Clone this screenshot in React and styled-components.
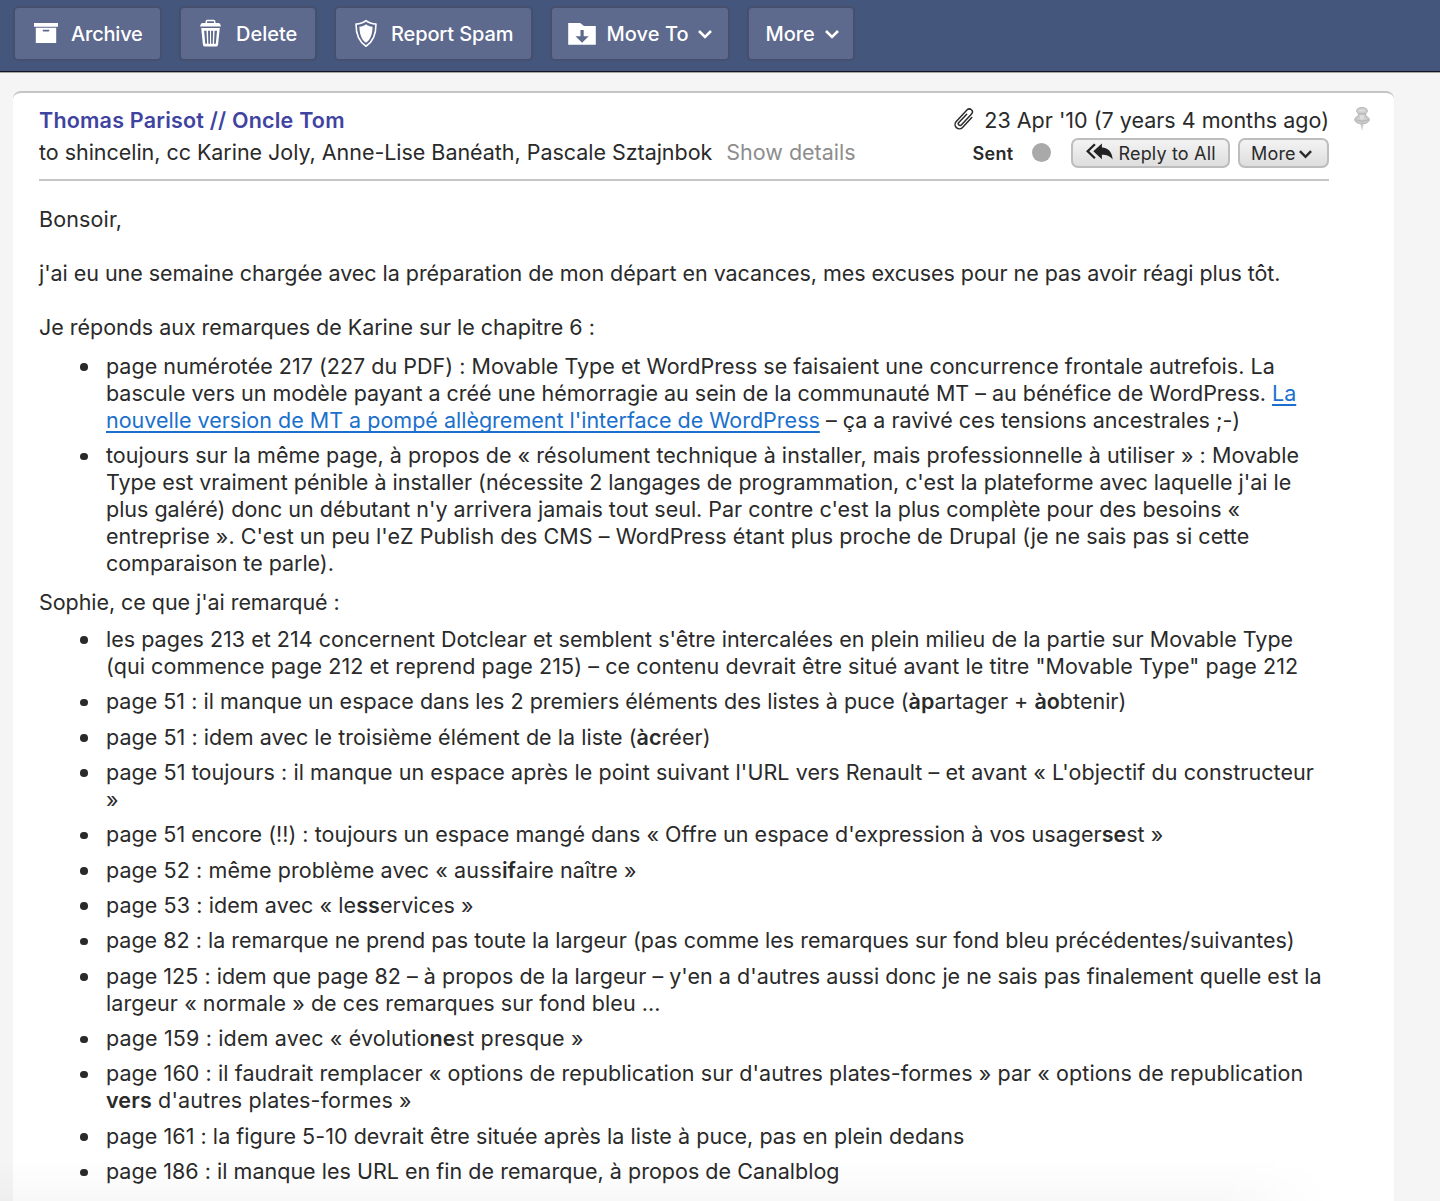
import React from 'react';
import styled, { createGlobalStyle } from 'styled-components';

const GlobalStyle = createGlobalStyle`
  *, *::before, *::after { box-sizing: border-box; }
  body {
    margin: 0;
    background: #f5f5f5;
    color: #2a2a2a;
    font-family: Inter, "Liberation Sans", sans-serif;
    font-size: 21.5px;
    line-height: 27px;
  }
`;

const Page = styled.div`
  position: relative;
  height: 1201px;
  overflow: hidden;
`;

const Toolbar = styled.header`
  display: flex;
  align-items: flex-start;
  gap: 17px;
  height: 73px;
  padding: 6px 13px 0;
  background: #45567d;
  border-bottom: 1px solid #a6a69c;
  box-shadow: inset 0 -1px 0 #141722;
`;

const ToolButton = styled.button`
  display: flex;
  align-items: center;
  width: ${(p) => p.$width}px;
  height: 55px;
  padding: 0 0 0 ${(p) => p.$pad}px;
  border: 2px solid #46506e;
  border-radius: 5px;
  background: #5d698d;
  color: #fff;
  font: 500 20px/24px Inter, "Liberation Sans", sans-serif;
  letter-spacing: ${(p) => p.$ls}px;
  white-space: nowrap;
`;

const ToolIcon = styled.svg`
  flex: none;
  display: block;
  width: ${(p) => p.$w}px;
  height: 30px;
  margin-right: ${(p) => p.$gap}px;
`;

const Chevron = styled.svg`
  flex: none;
  display: block;
  width: ${(p) => p.$w}px;
  height: 10px;
  margin-left: ${(p) => p.$gap}px;
  fill: none;
  stroke: currentColor;
  stroke-width: 2.6;
`;

const Card = styled.article`
  width: 1381px;
  min-height: 1130px;
  margin: 18px 0 0 13px;
  padding: 14px 0 0 26px;
  border-top: 2px solid #c4c4c4;
  border-radius: 8px 8px 0 0;
  background: #fff;
`;

const CardHead = styled.div`
  display: flex;
  align-items: flex-start;
`;

const MessageHead = styled.header`
  display: flex;
  justify-content: space-between;
  width: 1290px;
  height: 73.5px;
  border-bottom: 2px solid #c6c6c6;
`;

const People = styled.div`
  display: flex;
  flex-direction: column;
  gap: 5px;
  white-space: nowrap;
`;

const Sender = styled.div`
  color: #3f44a0;
  font-weight: 600;
  letter-spacing: 0.2px;
`;

const Recipients = styled.div`
  letter-spacing: -0.035px;
`;

const Details = styled.span`
  margin-left: 14px;
  color: #8d8d8d;
  letter-spacing: 0;
`;

const Meta = styled.div`
  display: flex;
  flex-direction: column;
  align-items: flex-end;
  gap: 4px;
`;

const DateLine = styled.div`
  display: flex;
  align-items: center;
  gap: 8px;
  height: 27px;
`;

const Actions = styled.div`
  display: flex;
  align-items: center;
  height: 30px;
`;

const Folder = styled.span`
  font-size: 18px;
  font-weight: 600;
  letter-spacing: 0.3px;
`;

const Dot = styled.span`
  width: 19px;
  height: 19px;
  margin: 0 20px 2px 18px;
  border-radius: 50%;
  background: #a9a9a9;
`;

const SmallButton = styled.button`
  display: flex;
  align-items: center;
  width: ${(p) => p.$width}px;
  height: 30px;
  margin-left: ${(p) => p.$gap || 0}px;
  padding: 1px 0 0 ${(p) => p.$pad}px;
  border: 2px solid #bdbdbd;
  border-radius: 7px;
  background: linear-gradient(#f3f3f3, #dedede);
  color: #2a2a2a;
  font: 400 18px/24px Inter, "Liberation Sans", sans-serif;
  letter-spacing: 0.17px;
  white-space: nowrap;
`;

const ButtonLabel = styled.span`
  margin-left: 6px;
`;

const Glyph = styled.svg`
  flex: none;
  display: block;
  margin-bottom: ${(p) => p.$lift || 0}px;
`;

const PinSlot = styled.div`
  padding: 0 0 0 23.5px;
`;

const Body = styled.div`
  padding-top: 25.5px;
`;

const Paragraph = styled.p`
  margin: 0 0 ${(p) => p.$after}px;
`;

const List = styled.ul`
  display: flex;
  flex-direction: column;
  gap: 8.35px;
  margin: 0 0 ${(p) => p.$after || 0}px;
  padding: 0;
  list-style: none;
`;

const Item = styled.li`
  display: flex;
  padding-left: 41px;
`;

const Bullet = styled.span`
  flex: none;
  width: 7.6px;
  height: 7.6px;
  margin: 10.4px 18.4px 0 0;
  border-radius: 50%;
  background: #2a2a2a;
`;

const Line = styled.span`
  display: block;
  height: 27px;
  white-space: pre;
  letter-spacing: ${(p) => p.$ls - 0.007}px;
`;

const Strong = styled.b`
  font-weight: 600;
`;

const Link = styled.a`
  color: #1a70cc;
  text-decoration: underline;
  text-decoration-thickness: 1.6px;
  text-underline-offset: 2.5px;
  text-decoration-skip-ink: none;
`;

const BottomShade = styled.div`
  position: absolute;
  left: 0;
  bottom: 0;
  width: 1330px;
  height: 42px;
  background: linear-gradient(transparent, rgba(0, 0, 0, 0.028));
  mask-image: linear-gradient(to right, #000 92%, transparent);
  pointer-events: none;
`;

const ArchiveIcon = () => (
  <ToolIcon viewBox="0 0 24 30" $w={24} $gap={13.5}>
    <path fill="#fff" fillRule="evenodd" d="M0 4h24v3.8H0zM1.8 8.8h20.4V24H1.8zM9.4 10.8a.8.8 0 0 0 0 1.6h5.2a.8.8 0 0 0 0-1.6z" />
  </ToolIcon>
);

const TrashIcon = () => (
  <ToolIcon viewBox="0 0 21 30" $w={21} $gap={15}>
    <path fill="none" stroke="#fff" strokeWidth="1.5" d="M6.3 4V2.4q0-.9.9-.9h6.6q.9 0 .9.9V4" />
    <path fill="#fff" d="M2.6 4h15.8q1.4 0 1.9 1.4l.7 2.2H0l.7-2.2Q1.2 4 2.6 4z" />
    <path fill="#fff" fillRule="evenodd" d="M1.2 9h18.6l-1.7 16.4q-.2 2.2-2.2 2.2H5.1q-2 0-2.2-2.2zM4.1 11.8l1.2 13h1.8l-.6-13zM8 11.8l.4 13h1.6v-13zM11.1 11.8v13h1.6l.4-13zM14.6 11.8l-.6 13h1.8l1.2-13z" />
  </ToolIcon>
);

const ShieldIcon = () => (
  <ToolIcon viewBox="0 0 22 30" $w={22} $gap={14.5}>
    <path fill="none" stroke="#fff" strokeWidth="1.6" strokeLinejoin="round" d="M11 1.7C8.4 3.9 5 5 1 5.1 1 15 3.2 22.6 11 27.2 18.8 22.6 21 15 21 5.1 17 5 13.6 3.9 11 1.7z" />
    <path fill="#fff" d="M11 5.3C9.2 6.8 7 7.5 4.4 7.7 4.7 15 6.3 20.6 11 23.8c4.7-3.2 6.3-8.8 6.600-16.1C15 7.500 12.800 6.800 11 5.300z" />
  </ToolIcon>
);

const MoveIcon = () => (
  <ToolIcon viewBox="0 0 28 30" $w={28} $gap={10.5}>
    <path fill="#fff" d="M.2 4h12l3.800 3.100h11.800V25.800H.2z" />
    <path fill="#5d698d" d="M12.500 11h3.200v6.200h5L14.100 23.800 7.500 17.200h5z" />
  </ToolIcon>
);

const Paperclip = () => (
  <Glyph width="23" height="24" viewBox="-11.5 -12 23 24" fill="none" stroke="#2a2a2a" strokeWidth="1.5" strokeLinecap="round" $lift={4}>
    <path transform="rotate(43)" d="M-1.700-5V6.500a1.700 1.700 0 0 0 3.400 0V-8.500a2.900 2.900 0 0 0-6 0V7.500a4.300 4.300 0 0 0 8.600 0V-6" />
  </Glyph>
);

const ReplyAllIcon = () => (
  <Glyph width="27" height="18" viewBox="0 0 27 18" $lift={3}>
    <path fill="none" stroke="#222" strokeWidth="2.300" d="M8.900 1.200 1.700 8.200l7.200 7" />
    <path fill="#222" d="M15.900.4v4.200c6.400.4 10.300 4.500 10.700 12-2.600-3.800-5.900-4.900-10.700-4.900v4.600L7.300 8.300z" />
  </Glyph>
);

const PinIcon = () => (
  <Glyph width="18" height="24" viewBox="0 0 18 24">
    <path fill="#d2d2d2" d="M7 16h4L9 24z" />
    <path fill="#cdcdcd" stroke="#b3b3b3" strokeWidth="1" d="M9 .6c3.200 0 5.400 1.300 5.400 3.200 0 1.200-.8 2-1.700 2.600v2.700c2 .7 3.600 1.900 3.600 3.500 0 2.500-3.300 4.200-7.300 4.200s-7.300-1.700-7.300-4.200c0-1.600 1.600-2.800 3.600-3.500V6.400C4.400 5.800 3.600 5 3.600 3.800 3.600 1.900 5.800.6 9 .6z" />
    <path fill="none" stroke="#b3b3b3" strokeWidth="1" d="M5.300 6.400q3.700 1.500 7.400 0M2.600 12.600q6.400 3.200 12.800 0" />
    <path fill="#dedede" d="M6 2.600h6v2H6zM7 8h4v4.500H7z" />
  </Glyph>
);

const Down = ({ gap, w = 14 }) => (
  <Chevron viewBox="0 0 14 10" $gap={gap} $w={w}>
    <path d="M1 2l6 6 6-6" />
  </Chevron>
);

const b = (text) => <Strong>{text}</Strong>;

const chapterNotes = [
  [
    [0.023, 'page numérotée 217 (227 du PDF) : Movable Type et WordPress se faisaient une concurrence frontale autrefois. La'],
    [-0.006, <>bascule vers un modèle payant a créé une hémorragie au sein de la communauté MT – au bénéfice de WordPress. <Link>La</Link></>],
    [0.009, <><Link>nouvelle version de MT a pompé allègrement l'interface de WordPress</Link> – ça a ravivé ces tensions ancestrales ;-)</>],
  ],
  [
    [0.059, 'toujours sur la même page, à propos de « résolument technique à installer, mais professionnelle à utiliser » : Movable'],
    [0.004, "Type est vraiment pénible à installer (nécessite 2 langages de programmation, c'est la plateforme avec laquelle j'ai le"],
    [0.001, "plus galéré) donc un débutant n'y arrivera jamais tout seul. Par contre c'est la plus complète pour des besoins «"],
    [0.057, "entreprise ». C'est un peu l'eZ Publish des CMS – WordPress étant plus proche de Drupal (je ne sais pas si cette"],
    [-0.029, 'comparaison te parle).'],
  ],
];

const pageNotes = [
  [
    [0.027, "les pages 213 et 214 concernent Dotclear et semblent s'être intercalées en plein milieu de la partie sur Movable Type"],
    [0.077, '(qui commence page 212 et reprend page 215) – ce contenu devrait être situé avant le titre "Movable Type" page 212'],
  ],
  [[0.021, <>page 51 : il manque un espace dans les 2 premiers éléments des listes à puce ({b('àp')}artager + {b('ào')}btenir)</>]],
  [[0.054, <>page 51 : idem avec le troisième élément de la liste ({b('àc')}réer)</>]],
  [
    [0.08, "page 51 toujours : il manque un espace après le point suivant l'URL vers Renault – et avant « L'objectif du constructeur"],
    [0, '»'],
  ],
  [[0.031, <>page 51 encore (!!) : toujours un espace mangé dans « Offre un espace d'expression à vos usager{b('se')}st »</>]],
  [[0.092, <>page 52 : même problème avec « auss{b('if')}aire naître »</>]],
  [[0.089, <>page 53 : idem avec « le{b('ss')}ervices »</>]],
  [[0.009, 'page 82 : la remarque ne prend pas toute la largeur (pas comme les remarques sur fond bleu précédentes/suivantes)']],
  [
    [0.03, "page 125 : idem que page 82 – à propos de la largeur – y'en a d'autres aussi donc je ne sais pas finalement quelle est la"],
    [0.079, 'largeur « normale » de ces remarques sur fond bleu ...'],
  ],
  [[0.153, <>page 159 : idem avec « évolutio{b('ne')}st presque »</>]],
  [
    [0.088, "page 160 : il faudrait remplacer « options de republication sur d'autres plates-formes » par « options de republication"],
    [0.158, <>{b('vers')} d'autres plates-formes »</>],
  ],
  [[0.058, 'page 161 : la figure 5-10 devrait être située après la liste à puce, pas en plein dedans']],
  [[0.023, 'page 186 : il manque les URL en fin de remarque, à propos de Canalblog']],
];

const Notes = ({ items, after }) => (
  <List $after={after}>
    {items.map((lines, i) => (
      <Item key={i}>
        <Bullet />
        <div>
          {lines.map(([ls, text], j) => (
            <Line key={j} $ls={ls}>{text}</Line>
          ))}
        </div>
      </Item>
    ))}
  </List>
);

export default function App() {
  return (
    <Page>
      <GlobalStyle />
      <Toolbar>
        <ToolButton $width={149} $pad={18.5} $ls={-0.2}><ArchiveIcon />Archive</ToolButton>
        <ToolButton $width={138} $pad={19} $ls={0}><TrashIcon />Delete</ToolButton>
        <ToolButton $width={199} $pad={18.5} $ls={-0.13}><ShieldIcon />Report Spam</ToolButton>
        <ToolButton $width={180} $pad={16} $ls={0.07}><MoveIcon />Move To<Down gap={9.5} /></ToolButton>
        <ToolButton $width={108} $pad={16.5} $ls={-0.1}><span>More</span><Down gap={10} /></ToolButton>
      </Toolbar>
      <Card>
        <CardHead>
          <MessageHead>
            <People>
              <Sender>Thomas Parisot // Oncle Tom</Sender>
              <Recipients>
                to shincelin, cc Karine Joly, Anne-Lise Banéath, Pascale Sztajnbok
                <Details>Show details</Details>
              </Recipients>
            </People>
            <Meta>
              <DateLine><Paperclip />23 Apr '10 (7 years 4 months ago)</DateLine>
              <Actions>
                <Folder>Sent</Folder>
                <Dot />
                <SmallButton $width={159} $pad={13}><ReplyAllIcon /><ButtonLabel>Reply to All</ButtonLabel></SmallButton>
                <SmallButton $width={91} $pad={11} $gap={8.5}>More<Down gap={3} w={13} /></SmallButton>
              </Actions>
            </Meta>
          </MessageHead>
          <PinSlot><PinIcon /></PinSlot>
        </CardHead>
        <Body>
          <Paragraph $after={27}><Line $ls={0.15}>Bonsoir,</Line></Paragraph>
          <Paragraph $after={27}>
            <Line $ls={-0.035}>j'ai eu une semaine chargée avec la préparation de mon départ en vacances, mes excuses pour ne pas avoir réagi plus tôt.</Line>
          </Paragraph>
          <Paragraph $after={12}><Line $ls={-0.02}>Je réponds aux remarques de Karine sur le chapitre 6 :</Line></Paragraph>
          <Notes items={chapterNotes} after={11.5} />
          <Paragraph $after={10.2}><Line $ls={-0.05}>Sophie, ce que j'ai remarqué :</Line></Paragraph>
          <Notes items={pageNotes} />
        </Body>
      </Card>
      <BottomShade />
    </Page>
  );
}
